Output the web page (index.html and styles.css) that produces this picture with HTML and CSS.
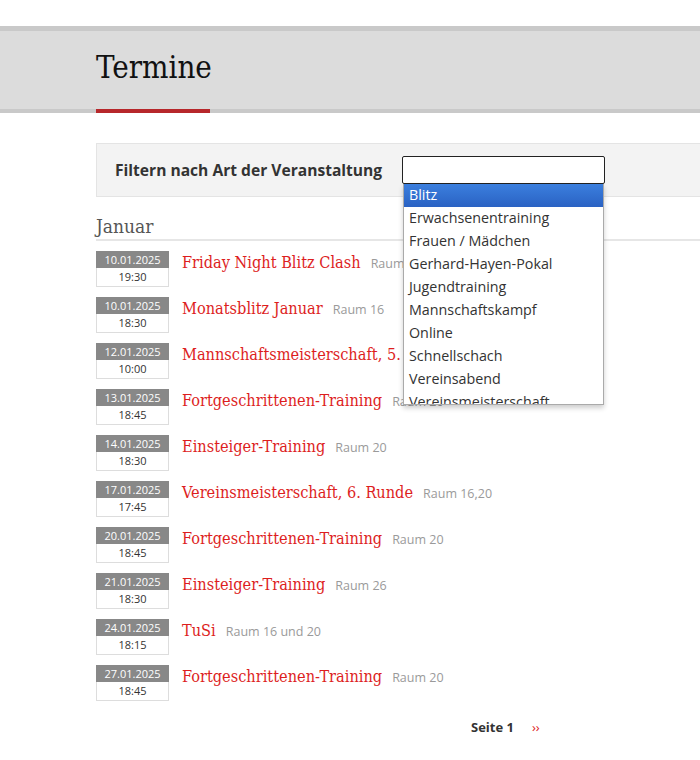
FILE: index.html
```html
<!DOCTYPE html>
<html lang="de">
<head>
<meta charset="utf-8">
<title>Termine</title>
<link rel="stylesheet" href="styles.css">
</head>
<body>
<header class="page-header">
  <div class="header-inner">
    <h1 class="page-title">Termine</h1>
  </div>
</header>
<main class="content">
  <div class="filter">
    <span class="filter-label">Filtern nach Art der Veranstaltung</span>
    <div class="select-wrap">
      <div class="select-box"></div>
      <ul class="dropdown">
        <li class="opt active">Blitz</li>
        <li class="opt">Erwachsenentraining</li>
        <li class="opt">Frauen / Mädchen</li>
        <li class="opt">Gerhard-Hayen-Pokal</li>
        <li class="opt">Jugendtraining</li>
        <li class="opt">Mannschaftskampf</li>
        <li class="opt">Online</li>
        <li class="opt">Schnellschach</li>
        <li class="opt">Vereinsabend</li>
        <li class="opt">Vereinsmeisterschaft</li>
      </ul>
    </div>
  </div>
  <h2 class="month">Januar</h2>
  <ul class="events">
    <li class="event"><div class="date"><span class="day">10.01.2025</span><span class="time">19:30</span></div><a class="title">Friday Night Blitz Clash</a><span class="room">Raum</span></li>
    <li class="event"><div class="date"><span class="day">10.01.2025</span><span class="time">18:30</span></div><a class="title">Monatsblitz Januar</a><span class="room">Raum 16</span></li>
    <li class="event"><div class="date"><span class="day">12.01.2025</span><span class="time">10:00</span></div><a class="title">Mannschaftsmeisterschaft, 5. Runde</a><span class="room"></span></li>
    <li class="event"><div class="date"><span class="day">13.01.2025</span><span class="time">18:45</span></div><a class="title">Fortgeschrittenen-Training</a><span class="room">Raum 20</span></li>
    <li class="event"><div class="date"><span class="day">14.01.2025</span><span class="time">18:30</span></div><a class="title">Einsteiger-Training</a><span class="room">Raum 20</span></li>
    <li class="event"><div class="date"><span class="day">17.01.2025</span><span class="time">17:45</span></div><a class="title">Vereinsmeisterschaft, 6. Runde</a><span class="room">Raum 16,20</span></li>
    <li class="event"><div class="date"><span class="day">20.01.2025</span><span class="time">18:45</span></div><a class="title">Fortgeschrittenen-Training</a><span class="room">Raum 20</span></li>
    <li class="event"><div class="date"><span class="day">21.01.2025</span><span class="time">18:30</span></div><a class="title">Einsteiger-Training</a><span class="room">Raum 26</span></li>
    <li class="event"><div class="date"><span class="day">24.01.2025</span><span class="time">18:15</span></div><a class="title">TuSi</a><span class="room">Raum 16 und 20</span></li>
    <li class="event"><div class="date"><span class="day">27.01.2025</span><span class="time">18:45</span></div><a class="title">Fortgeschrittenen-Training</a><span class="room">Raum 20</span></li>
  </ul>
  <nav class="pager">
    <span class="pager-current">Seite 1</span>
    <a class="pager-next">››</a>
  </nav>
</main>
</body>
</html>
```

FILE: styles.css
```css
html, body {
  margin: 0;
  padding: 0;
  background: #fff;
  overflow: hidden;
}
body {
  font-family: "Open Sans", "DejaVu Sans", sans-serif;
  color: #333;
  width: 700px;
}
.page-header {
  margin-top: 26px;
  background: #dcdcdc;
  border-top: 5px solid #c9c9c9;
  border-bottom: 4px solid #c9c9c9;
}
.header-inner {
  padding-left: 96px;
  height: 78px;
  display: flex;
  align-items: flex-end;
}
.page-title {
  margin: 0 0 -4px 0;
  width: 114px;
  height: 82px;
  box-sizing: border-box;
  border-bottom: 4px solid #b7272b;
  font-family: "DejaVu Serif Condensed", "DejaVu Serif", serif;
  font-weight: normal;
  font-size: 31px;
  line-height: 72px;
  color: #111;
  white-space: nowrap;
}
.content {
  padding-left: 96px;
  margin-top: 30px;
}
.filter {
  background: #f3f3f3;
  border: 1px solid #e4e4e4;
  border-right: none;
  height: 52px;
  display: flex;
  align-items: center;
  padding-left: 18px;
}
.filter-label {
  font-weight: bold;
  font-size: 15.6px;
  color: #333;
  width: 287px;
  white-space: nowrap;
}
.select-wrap {
  position: relative;
}
.select-box {
  width: 201px;
  height: 26px;
  background: #fff;
  border: 1px solid #222;
  border-radius: 2px;
}
.dropdown {
  position: absolute;
  left: 1px;
  top: 28px;
  width: 201px;
  height: 221px;
  margin: 0;
  padding: 0;
  list-style: none;
  background: #fff;
  border: 1px solid #aaa;
  border-top: none;
  box-shadow: 0 3px 5px rgba(0,0,0,0.2);
  overflow: hidden;
  box-sizing: border-box;
  z-index: 5;
}
.opt {
  height: 23px;
  line-height: 22px;
  padding-left: 5px;
  font-size: 14.3px;
  color: #333;
  white-space: nowrap;
}
.opt.active {
  background: linear-gradient(#3b7fde, #2a62c3);
  color: #fff;
}
.month {
  margin: 16px 0 0 0;
  font-family: "DejaVu Serif Condensed", "DejaVu Serif", serif;
  font-weight: normal;
  font-size: 19px;
  color: #555;
  height: 26px;
  line-height: 27px;
  border-bottom: 2px solid #e6e6e6;
}
.events {
  list-style: none;
  margin: 10px 0 0 0;
  padding: 0;
}
.event {
  display: flex;
  align-items: flex-start;
  height: 46px;
}
.date {
  width: 73px;
  flex: none;
  display: flex;
  flex-direction: column;
  text-align: center;
  font-size: 11px;
  border: 1px solid #ddd;
  box-sizing: border-box;
}
.day {
  background: #888;
  color: #fff;
  height: 17px;
  line-height: 17px;
  margin: -1px -1px 0 -1px;
}
.time {
  background: #fff;
  color: #333;
  height: 18px;
  line-height: 18px;
}
.title {
  margin-left: 13px;
  font-family: "DejaVu Serif Condensed", "DejaVu Serif", serif;
  font-size: 16.2px;
  color: #dd1e1e;
  line-height: 23px;
  white-space: nowrap;
}
.room {
  margin-left: 10px;
  font-size: 12.5px;
  color: #9a9a9a;
  line-height: 25px;
  white-space: nowrap;
}
.pager {
  display: flex;
  gap: 18px;
  margin-top: 7px;
  padding-left: 375px;
  font-size: 13px;
}
.pager-current {
  font-weight: bold;
  color: #333;
}
.pager-next {
  color: #dd1e1e;
}
```
